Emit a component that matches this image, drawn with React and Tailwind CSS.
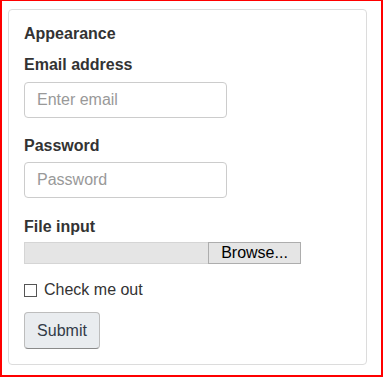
export default function App() {
  return (
    <div className="h-[377px] w-[383px] border-x-2 border-t border-b-2 border-[#ff0000] bg-white font-['Liberation_Sans',Arial,sans-serif] text-[16px] text-[#333333]">
      <div className="ml-[6px] mt-[8px] h-[356px] w-[359px] rounded-[4px] border border-[#dcdcdc] px-[15px] pt-[12px]">
        <div className="font-bold leading-6">Appearance</div>

        <div className="mt-[7px] font-bold leading-6">Email address</div>
        <div className="mt-[5px] flex h-[36px] w-[203px] items-center rounded-[4px] border border-[#cccccc] px-[12px] text-[#999999]">
          Enter email
        </div>

        <div className="mt-[16px] font-bold leading-6">Password</div>
        <div className="mt-[4px] flex h-[36px] w-[203px] items-center rounded-[4px] border border-[#cccccc] px-[12px] text-[#999999]">
          Password
        </div>

        <div className="mt-[17px] font-bold leading-6">File input</div>
        <div className="mt-[3px] flex h-[22px] w-[277px]">
          <div className="h-full w-[184px] border border-r-0 border-[#d5d5d5] bg-[#e5e5e5]"></div>
          <div className="flex h-full w-[93px] items-center justify-center border border-[#adadad] bg-[#e5e5e5] leading-none text-black">
            Browse...
          </div>
        </div>

        <div className="mt-[14px] flex h-6 items-center gap-[7px] text-[#333333]">
          <div className="h-[13px] w-[13px] border border-[#555555] bg-white"></div>
          <span>Check me out</span>
        </div>

        <div className="mt-[10px] flex h-[37px] w-[76px] items-center justify-center rounded-[4px] border border-[#bdbdbd] border-b-[#8a8a8a] bg-[#e9ecef] text-[#333b48]">
          Submit
        </div>
      </div>
    </div>
  )
}
